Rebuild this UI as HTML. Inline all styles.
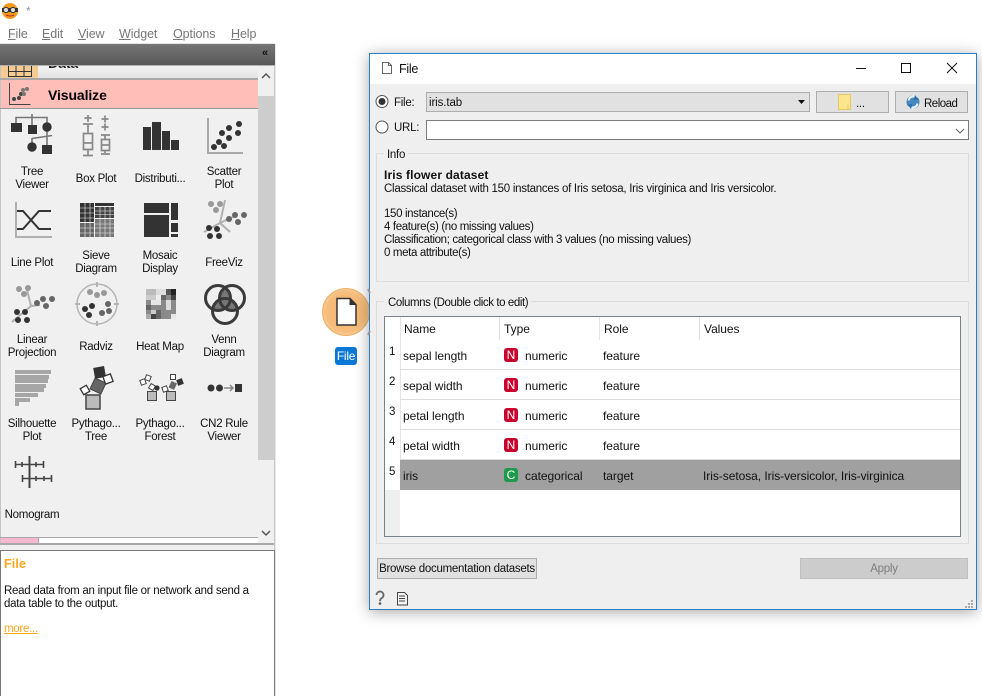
<!DOCTYPE html>
<html><head><meta charset="utf-8"><style>
html,body{margin:0;padding:0;width:982px;height:696px;overflow:hidden;background:#fff}
body{position:relative;font-family:"Liberation Sans",sans-serif;font-size:11.5px;letter-spacing:-.27px;color:#111}
div,span{position:absolute;box-sizing:border-box}
.t{white-space:nowrap;line-height:13px;margin-top:1px}
.c{text-align:center;transform:translateX(-50%);line-height:13px;white-space:nowrap;margin-top:1px}
.n{margin-top:0}
.g{font-size:12px;letter-spacing:-.05px;margin-top:0}
.m{color:#777;font-size:12.5px;letter-spacing:-.1px;top:27px;line-height:14px}
.m u{text-decoration:underline}
.b{font-weight:bold;font-size:12px;letter-spacing:.13px}
.badge{width:14px;height:14px;border-radius:3px;color:#fff;text-align:center;line-height:14px;font-size:12px;letter-spacing:0}
svg{position:absolute;left:0;top:0}
</style></head><body>
<div class="t n" style="left:26px;top:5px;color:#999;font-size:12px">*</div>
<div class="m" style="left:8px"><u>F</u>ile</div>
<div class="m" style="left:42px"><u>E</u>dit</div>
<div class="m" style="left:78px"><u>V</u>iew</div>
<div class="m" style="left:119px"><u>W</u>idget</div>
<div class="m" style="left:173px"><u>O</u>ptions</div>
<div class="m" style="left:231px"><u>H</u>elp</div>
<div style="left:0;top:43px;width:275px;height:1px;background:#e6e6e6"></div>
<div style="left:0;top:44px;width:275px;height:21px;background:linear-gradient(#767676,#585858)"></div>
<div class="t n" style="left:262px;top:47px;color:#111;font-size:11px;font-weight:bold">«</div>
<div style="left:275px;top:44px;width:1px;height:652px;background:#e8e8e8"></div>
<div style="left:0;top:65px;width:258px;height:472px;background:#f0f0f0"></div>
<div style="left:0;top:65px;width:1px;height:480px;background:#c4c4c4"></div>
<div style="left:258px;top:66px;width:16px;height:481px;background:#f0f0f0"></div>
<div style="left:258px;top:96px;width:16px;height:364px;background:#cdcdcd"></div>
<div style="left:274px;top:65px;width:1px;height:485px;background:#c8c8c8"></div>
<div style="left:0;top:65px;width:275px;height:1px;background:#b0b0b0"></div>
<div style="left:1px;top:66px;width:37px;height:12px;background:#f5cb93"></div>
<div style="left:38px;top:66px;width:220px;height:12px;background:linear-gradient(#f4f4f4,#e2e2e2)"></div>
<div class="t n" style="left:48px;top:56px;font-size:14px;font-weight:bold;line-height:14px;letter-spacing:0;color:#222;clip-path:inset(10px 0 0 0)">Data</div>
<div style="left:0;top:78px;width:258px;height:2px;background:#a9a9a9"></div>
<div style="left:1px;top:80px;width:257px;height:28px;background:#ffbfb8"></div>
<div style="left:0;top:108px;width:258px;height:1px;background:#999"></div>
<div class="t n" style="left:48px;top:89px;font-size:14px;font-weight:bold;letter-spacing:-.1px;color:#000">Visualize</div>
<div class="c" style="left:32px;top:165px">Tree<br>Viewer</div>
<div class="c" style="left:96px;top:172px">Box Plot</div>
<div class="c" style="left:160px;top:172px">Distributi...</div>
<div class="c" style="left:224px;top:165px">Scatter<br>Plot</div>
<div class="c" style="left:32px;top:256px">Line Plot</div>
<div class="c" style="left:96px;top:249px">Sieve<br>Diagram</div>
<div class="c" style="left:160px;top:249px">Mosaic<br>Display</div>
<div class="c" style="left:224px;top:256px">FreeViz</div>
<div class="c" style="left:32px;top:333px">Linear<br>Projection</div>
<div class="c" style="left:96px;top:340px">Radviz</div>
<div class="c" style="left:160px;top:340px">Heat Map</div>
<div class="c" style="left:224px;top:333px">Venn<br>Diagram</div>
<div class="c" style="left:32px;top:417px">Silhouette<br>Plot</div>
<div class="c" style="left:96px;top:417px">Pythago...<br>Tree</div>
<div class="c" style="left:160px;top:417px">Pythago...<br>Forest</div>
<div class="c" style="left:224px;top:417px">CN2 Rule<br>Viewer</div>
<div class="c" style="left:32px;top:508px">Nomogram</div>
<div style="left:0;top:537px;width:258px;height:1px;background:#a8a8a8"></div>
<div style="left:1px;top:538px;width:37px;height:5px;background:#f8b8d0"></div>
<div style="left:38px;top:538px;width:1px;height:5px;background:#aaa"></div>
<div style="left:0;top:543px;width:274px;height:2px;background:#a8a8a8"></div>
<div style="left:0;top:545px;width:274px;height:5px;background:#f0f0f0"></div>
<div style="left:0;top:550px;width:275px;height:146px;background:#fff;border:1px solid #777;border-bottom:0"></div>
<div class="t b" style="left:4px;top:557px;color:#ffa51e;font-size:12.5px">File</div>
<div class="t" style="left:4px;top:584px">Read data from an input file or network and send a<br>data table to the output.</div>
<div class="t" style="left:4px;top:622px;color:#ffa51e;text-decoration:underline">more...</div>

<!-- canvas node -->
<div style="left:322px;top:288px;width:48px;height:48px;border-radius:50%;background:#f6bb78;border:1px solid #edb06a;box-shadow:inset 0 0 6px #f9d6a8"></div>
<div style="left:335px;top:347px;width:22px;height:18px;border-radius:3px;background:#0a78d4;color:#fff;text-align:center;line-height:18px;font-size:12px">File</div>

<!-- window -->
<div style="left:369px;top:53px;width:608px;height:557px;background:#efefef;border:1px solid #2a7fc4;box-shadow:0 2px 14px rgba(0,0,0,.35)"></div>
<div style="left:370px;top:54px;width:606px;height:30px;background:#fff"></div>
<div class="t" style="left:399px;top:62px;font-size:12.5px">File</div>
<div class="t" style="left:394px;top:96px">File:</div>
<div class="t" style="left:394px;top:121px">URL:</div>
<div style="left:426px;top:92px;width:384px;height:20px;background:#e1e1e1;border:1px solid #adadad"></div>
<div class="t" style="left:429px;top:96px;letter-spacing:-.1px">iris.tab</div>
<div style="left:816px;top:91px;width:73px;height:22px;background:#e1e1e1;border:1px solid #adadad"></div>
<div class="t" style="left:856px;top:97px">...</div>
<div style="left:895px;top:91px;width:73px;height:22px;background:#e1e1e1;border:1px solid #adadad"></div>
<div class="t" style="left:924px;top:97px;letter-spacing:-.5px">Reload</div>
<div style="left:426px;top:120px;width:543px;height:20px;background:#fff;border:1px solid #7a7a7a"></div>
<div style="left:376px;top:153px;width:593px;height:129px;border:1px solid #dcdcdc"></div>
<div class="t" style="left:384px;top:148px;background:#efefef;padding:0 3px">Info</div>
<div class="t b n" style="left:384px;top:169px">Iris flower dataset</div>
<div class="t" style="left:384px;top:182px">Classical dataset with 150 instances of Iris setosa, Iris virginica and Iris versicolor.</div>
<div class="t" style="left:384px;top:207px;letter-spacing:-.36px">150 instance(s)<br>4 feature(s) (no missing values)<br>Classification; categorical class with 3 values (no missing values)<br>0 meta attribute(s)</div>
<div style="left:376px;top:301px;width:593px;height:243px;border:1px solid #dcdcdc"></div>
<div class="t" style="left:384px;top:296px;background:#efefef;padding:0 3px 0 4px;letter-spacing:-.42px">Columns (Double click to edit)</div>
<div style="left:384px;top:316px;width:577px;height:221px;background:#fff;border:1px solid #7a8288"></div>
<div style="left:385px;top:490px;width:15px;height:46px;background:#efefef"></div>
<div class="t g" style="left:404px;top:323px">Name</div>
<div class="t g" style="left:504px;top:323px">Type</div>
<div class="t g" style="left:604px;top:323px">Role</div>
<div class="t g" style="left:704px;top:323px">Values</div>
<div style="left:400px;top:317px;width:1px;height:173px;background:#e4e4e4"></div>
<div style="left:499px;top:317px;width:1px;height:23px;background:#e4e4e4"></div>
<div style="left:599px;top:317px;width:1px;height:23px;background:#e4e4e4"></div>
<div style="left:699px;top:317px;width:1px;height:23px;background:#e4e4e4"></div>
<div style="left:400px;top:369px;width:560px;height:1px;background:#dcdcdc"></div>
<div style="left:400px;top:399px;width:560px;height:1px;background:#dcdcdc"></div>
<div style="left:400px;top:429px;width:560px;height:1px;background:#dcdcdc"></div>
<div style="left:400px;top:459px;width:560px;height:1px;background:#dcdcdc"></div>
<div style="left:400px;top:460px;width:560px;height:30px;background:#a0a0a0"></div>
<div class="t" style="left:389px;top:345px">1</div><div class="t" style="left:389px;top:375px">2</div><div class="t" style="left:389px;top:405px">3</div><div class="t" style="left:389px;top:435px">4</div><div class="t" style="left:389px;top:465px">5</div>
<div class="t g" style="left:403px;top:350px">sepal length</div><div class="badge" style="left:504px;top:348px;background:#c9002c">N</div><div class="t g" style="left:525px;top:350px">numeric</div><div class="t g" style="left:603px;top:350px">feature</div>
<div class="t g" style="left:403px;top:380px">sepal width</div><div class="badge" style="left:504px;top:378px;background:#c9002c">N</div><div class="t g" style="left:525px;top:380px">numeric</div><div class="t g" style="left:603px;top:380px">feature</div>
<div class="t g" style="left:403px;top:410px">petal length</div><div class="badge" style="left:504px;top:408px;background:#c9002c">N</div><div class="t g" style="left:525px;top:410px">numeric</div><div class="t g" style="left:603px;top:410px">feature</div>
<div class="t g" style="left:403px;top:440px">petal width</div><div class="badge" style="left:504px;top:438px;background:#c9002c">N</div><div class="t g" style="left:525px;top:440px">numeric</div><div class="t g" style="left:603px;top:440px">feature</div>
<div class="t g" style="left:403px;top:470px">iris</div><div class="badge" style="left:504px;top:468px;background:#1d9a4b">C</div><div class="t g" style="left:525px;top:470px">categorical</div><div class="t g" style="left:603px;top:470px">target</div><div class="t g" style="left:703px;top:470px">Iris-setosa, Iris-versicolor, Iris-virginica</div>
<div class="t n" style="left:377px;top:558px;width:160px;height:21px;background:#e1e1e1;border:1px solid #adadad;padding-top:1px;line-height:19px;text-align:center">Browse documentation datasets</div>
<div class="t n" style="left:800px;top:558px;width:168px;height:21px;background:#cccccc;border:1px solid #bfbfbf;padding-top:1px;line-height:19px;text-align:center;color:#7d7d7d">Apply</div>

<svg width="982" height="696" viewBox="0 0 982 696">
<defs>
<clipPath id="v1"><circle cx="218" cy="298" r="12.5"/></clipPath>
<clipPath id="v2"><circle cx="232" cy="298" r="12.5"/></clipPath>
</defs>
<!-- logo -->
<circle cx="10" cy="11" r="8" fill="#f59a1b"/><rect x="2" y="8" width="16" height="4" fill="#333"/><circle cx="6" cy="10" r="2.6" fill="#ddd" stroke="#333"/><circle cx="13" cy="10" r="2.6" fill="#ddd" stroke="#333"/><path d="M6 15q4 2 8 0" stroke="#a33" fill="none"/>
<!-- data icon -->
<path d="M8.500 66v10.500h23V66M8.500 71.500h23M16 66v10M24 66v10" fill="none" stroke="#333"/>
<!-- visualize -->
<path d="M9.500 83v21.500h21" stroke="#444" fill="none"/>
<g fill="#444"><circle cx="14" cy="99" r="2"/><circle cx="19" cy="98" r="2"/><circle cx="21" cy="94" r="2"/></g><g fill="#777"><circle cx="23" cy="90" r="2"/><circle cx="27" cy="89" r="2"/><circle cx="24" cy="94" r="2"/></g>
<!-- tree -->
<path d="M32 114v4M16 125v-7.500h31V125M32 118v8M47 131v7M32 138.500l20-3M32 138v6M47 137v8" fill="none" stroke="#777" stroke-width="1.600"/>
<rect x="11" y="123" width="11" height="9" fill="#333"/><rect x="28" y="125" width="9" height="9" fill="#333"/><circle cx="47" cy="127" r="4.700" fill="#333"/><circle cx="32" cy="147" r="4.700" fill="#333"/><rect x="42" y="145" width="10" height="9" fill="#333"/>
<!-- box plot -->
<g stroke="#888" stroke-width="1.700" fill="none"><path d="M84.500 118h7M88 115v7M83 124h10M88 124v9M83.500 133.500h9v16h-9zM83.500 143h9M88 149v6M83 155.500h10"/><path d="M101.500 119h7M105 115.500v7M101.500 127h7M105 123.500v7M101 135h9M105 135v4M101.500 139.500h8v11h-8zM101.500 145h8M105 150v3M101 154h9"/></g>
<!-- distribution -->
<g fill="#333"><rect x="143" y="127" width="8" height="23"/><rect x="152" y="122" width="9" height="28"/><rect x="162" y="131" width="8" height="19"/><rect x="171" y="140" width="8" height="10"/></g>
<!-- scatter -->
<path d="M208 118v35h35" stroke="#a8a8a8" stroke-width="2" fill="none"/>
<g fill="#333"><circle cx="214" cy="147" r="3"/><circle cx="219" cy="142" r="3"/><circle cx="224" cy="146" r="3"/><circle cx="222" cy="133" r="3"/><circle cx="229" cy="138" r="3"/><circle cx="229" cy="128" r="3"/><circle cx="238" cy="133" r="3"/><circle cx="239" cy="124" r="3"/></g>
<!-- line plot -->
<path d="M16 202v35h36" stroke="#b0b0b0" stroke-width="2" fill="none"/>
<path d="M17 211h6l16 18h12M17 229h6l16-18h12" stroke="#333" stroke-width="2" fill="none"/>
<!-- sieve -->
<g><rect x="80" y="203" width="14" height="19" fill="#333"/><rect x="95" y="203" width="19" height="3" fill="#333"/><rect x="95" y="207" width="19" height="11" fill="#444"/><rect x="80" y="223" width="14" height="14" fill="#666"/><rect x="95" y="219" width="19" height="18" fill="#777"/><path d="M85 203v34M90 203v34M100 207v30M105 207v30M110 207v30M80 208h14M80 213h14M80 218h14M95 211h19M95 214.500h19M95 224h19M80 228h34M80 233h34" stroke="#f0f0f0" stroke-width=".6"/></g>
<!-- mosaic -->
<g fill="#333"><rect x="144" y="203" width="25" height="10"/><rect x="144" y="215" width="25" height="22"/><rect x="171" y="203" width="7" height="17"/><rect x="171" y="223" width="7" height="9"/><rect x="171" y="234" width="7" height="3"/></g>
<!-- freeviz -->
<path d="M225 200l-5 23-16 9M220 223l10 9M220 223l17-8" stroke="#b0b0b0" stroke-width="2" fill="none"/>
<g fill="#999"><circle cx="211" cy="204" r="3"/><circle cx="220" cy="204" r="3"/><circle cx="216" cy="210" r="3"/></g>
<g fill="#666"><circle cx="229" cy="219" r="3"/><circle cx="235" cy="215" r="3"/><circle cx="238" cy="222" r="3"/><circle cx="244" cy="215" r="3"/></g>
<g fill="#333"><circle cx="209" cy="228" r="3"/><circle cx="217" cy="229" r="3"/><circle cx="210" cy="236" r="3"/><circle cx="219" cy="236" r="3"/></g>
<!-- linear projection -->
<path d="M27 290l4 16-19 16M31 306l9-1" stroke="#b0b0b0" stroke-width="2" fill="none"/>
<g fill="#999"><circle cx="19" cy="289" r="3"/><circle cx="28" cy="288" r="3"/><circle cx="24" cy="294" r="3"/></g>
<g fill="#666"><circle cx="37" cy="303" r="3"/><circle cx="43" cy="299" r="3"/><circle cx="46" cy="306" r="3"/><circle cx="52" cy="299" r="3"/></g>
<g fill="#333"><circle cx="17" cy="312" r="3"/><circle cx="25" cy="312" r="3"/><circle cx="18" cy="320" r="3"/><circle cx="27" cy="320" r="3"/></g>
<!-- radviz -->
<circle cx="97" cy="304" r="20" fill="none" stroke="#b5b5b5" stroke-width="1.500"/><path d="M97 282v5M97 321v5M75 304h5M114 304h5" stroke="#b5b5b5" stroke-width="2"/>
<g fill="#999"><circle cx="90" cy="292" r="3"/><circle cx="97" cy="295" r="3"/><circle cx="104" cy="293" r="3"/></g>
<g fill="#666"><circle cx="108" cy="304" r="3"/><circle cx="109" cy="311" r="3"/><circle cx="102" cy="313" r="3"/></g>
<g fill="#333"><circle cx="85" cy="309" r="3"/><circle cx="92" cy="306" r="3"/><circle cx="89" cy="315" r="3"/></g>
<!-- heat map -->
<g><rect x="146" y="289" width="30" height="30" fill="#8a8a8a"/><rect x="146" y="289" width="10" height="6" fill="#bbb"/><rect x="156" y="289" width="10" height="6" fill="#ddd"/><rect x="166" y="289" width="5" height="6" fill="#555"/><rect x="171" y="289" width="5" height="6" fill="#222"/><rect x="146" y="295" width="10" height="5" fill="#ccc"/><rect x="156" y="295" width="5" height="5" fill="#eee"/><rect x="161" y="295" width="5" height="5" fill="#666"/><rect x="171" y="295" width="5" height="5" fill="#444"/><rect x="151" y="300" width="10" height="5" fill="#e5e5e5"/><rect x="166" y="300" width="5" height="10" fill="#ddd"/><rect x="146" y="305" width="5" height="5" fill="#666"/><rect x="151" y="310" width="5" height="4" fill="#ccc"/><rect x="156" y="310" width="5" height="9" fill="#666"/><rect x="171" y="314" width="5" height="5" fill="#e5e5e5"/><rect x="146" y="314" width="5" height="5" fill="#aaa"/><rect x="151" y="314" width="5" height="5" fill="#444"/></g>
<!-- venn -->
<circle cx="232" cy="298" r="12.500" fill="#777" clip-path="url(#v1)"/><circle cx="225" cy="311" r="12.500" fill="#777" clip-path="url(#v1)"/><circle cx="225" cy="311" r="12.500" fill="#777" clip-path="url(#v2)"/>
<g fill="none" stroke="#3a3a3a" stroke-width="3"><circle cx="218" cy="298" r="12.500"/><circle cx="232" cy="298" r="12.500"/><circle cx="225" cy="311" r="12.500"/></g>
<!-- silhouette -->
<g fill="#a6a6a6"><rect x="15" y="370" width="36" height="4"/><rect x="15" y="375" width="34" height="4"/><rect x="15" y="379" width="33" height="4"/><rect x="15" y="384" width="31" height="4"/><rect x="15" y="388" width="29" height="4"/><rect x="15" y="393" width="23" height="4"/><rect x="15" y="398" width="15" height="4"/><rect x="15" y="402" width="4" height="4"/></g>
<!-- pythagoras tree -->
<rect x="86" y="395" width="14" height="14" fill="#bbb" stroke="#444" stroke-width="1.500"/>
<rect x="92" y="380" width="12" height="12" fill="#666" stroke="#444" transform="rotate(25 98 386)"/>
<rect x="94" y="367" width="11" height="11" fill="#333" transform="rotate(-10 99 372)"/>
<rect x="81.500" y="386.500" width="7" height="7" fill="#fff" stroke="#333" stroke-width="1.300" transform="rotate(-30 85 390)"/>
<rect x="104" y="375" width="8" height="8" fill="#fff" stroke="#333" stroke-width="1.300" transform="rotate(-20 108 379)"/>
<!-- pythagoras forest -->
<g stroke="#444" fill="#fff"><rect x="147.500" y="391.500" width="9" height="9" fill="#bbb"/><rect x="166.500" y="391.500" width="9" height="9" fill="#bbb"/><rect x="145.500" y="375.500" width="5" height="5" transform="rotate(20 148 378)"/><rect x="140.500" y="379.500" width="5" height="5" transform="rotate(-20 143 382)"/><rect x="149.500" y="384.500" width="5" height="5" transform="rotate(30 152 387)"/><rect x="170.500" y="374.500" width="5" height="5"/><rect x="162.500" y="386.500" width="5" height="5" transform="rotate(-20 165 389)"/></g>
<circle cx="157" cy="388" r="2.600" fill="#333"/><rect x="170" y="382" width="6" height="7" fill="#666" transform="rotate(25 173 385)"/><rect x="177" y="379" width="6" height="6" fill="#333" transform="rotate(-20 180 382)"/>
<!-- cn2 -->
<g fill="#333"><circle cx="211" cy="388" r="3.500"/><circle cx="219.500" cy="388" r="3.500"/><rect x="235" y="384" width="7" height="8"/></g><path d="M224 388h9M230 385l3 3-3 3" stroke="#888" stroke-width="1.500" fill="none"/>
<!-- nomogram -->
<path d="M29.500 456v32" stroke="#444" stroke-width="2"/><path d="M15 464.500h29M22 478.500h30M15.500 461v7M22 462v5M36 462v5M43.500 461v7M22.500 475v7M36 476v5M44 476v5M51.500 475v7" stroke="#444" stroke-width="1.600" fill="none"/>
<!-- scroll arrows -->
<path d="M262 78l4-4 4 4M262 531l4 4 4-4" stroke="#555" stroke-width="1.500" fill="none"/>
<!-- node doc -->
<path d="M337 298.500h13l6 6v20.500h-19z" fill="#fff" stroke="#333" stroke-width="1.500"/><path d="M350 298.500v6h6" fill="#333" stroke="#333"/>
<path d="M368 289l2 4M368 335l2-4" stroke="#999" stroke-width="2"/>
<!-- title doc icon -->
<path d="M382.500 62.500h6l3 3v8h-9z M388.500 62.500v3h3" fill="#fff" stroke="#666"/>
<!-- window buttons -->
<path d="M856 68.500h10M901.500 63.500h9v9h-9zM947 63l10 10M957 63l-10 10" stroke="#111" fill="none"/>
<!-- radios -->
<circle cx="382" cy="101.500" r="6" fill="#fff" stroke="#555"/><circle cx="382" cy="101.500" r="3.500" fill="#333"/>
<circle cx="382" cy="127" r="6" fill="#fff" stroke="#555"/>
<!-- combo arrows -->
<path d="M798 100h7l-3.500 4z" fill="#111"/><path d="M956 129l4 4 4-4" stroke="#666" fill="none"/>
<!-- folder -->
<rect x="838.500" y="94.500" width="12" height="15" fill="#fde58e" stroke="#e8c85c"/><path d="M848 104.500v5" stroke="#e8c85c"/>
<!-- reload -->
<circle cx="913" cy="102" r="6.500" fill="#4a88c0"/><path d="M908.500 100.500a5 5 0 0 1 8.500-2.500M917.500 103.500a5 5 0 0 1-8.500 2.500" stroke="#e8f6ff" stroke-width="2" fill="none"/><path d="M915 95l3.500 4.500-5 .5zM911 109l-3.500-4.500 5-.5z" fill="#2f6fa8"/>
<!-- footer icons -->
<path d="M376.500 595a3.500 3.500 0 1 1 5 3.200q-1.500 1-1.500 3" stroke="#666" stroke-width="1.800" fill="none"/><circle cx="380" cy="603.500" r="1.300" fill="#555"/>
<path d="M397.500 592.500h7l3 3v9.500h-10z" fill="#f4f4f4" stroke="#444"/><path d="M399 596h6M399 598.500h6M399 601h6" stroke="#444"/>
<!-- grip -->
<g fill="#aaa"><rect x="971" y="600" width="2" height="2"/><rect x="968" y="603" width="2" height="2"/><rect x="971" y="603" width="2" height="2"/><rect x="965" y="606" width="2" height="2"/><rect x="968" y="606" width="2" height="2"/><rect x="971" y="606" width="2" height="2"/></g>
</svg>
</body></html>
